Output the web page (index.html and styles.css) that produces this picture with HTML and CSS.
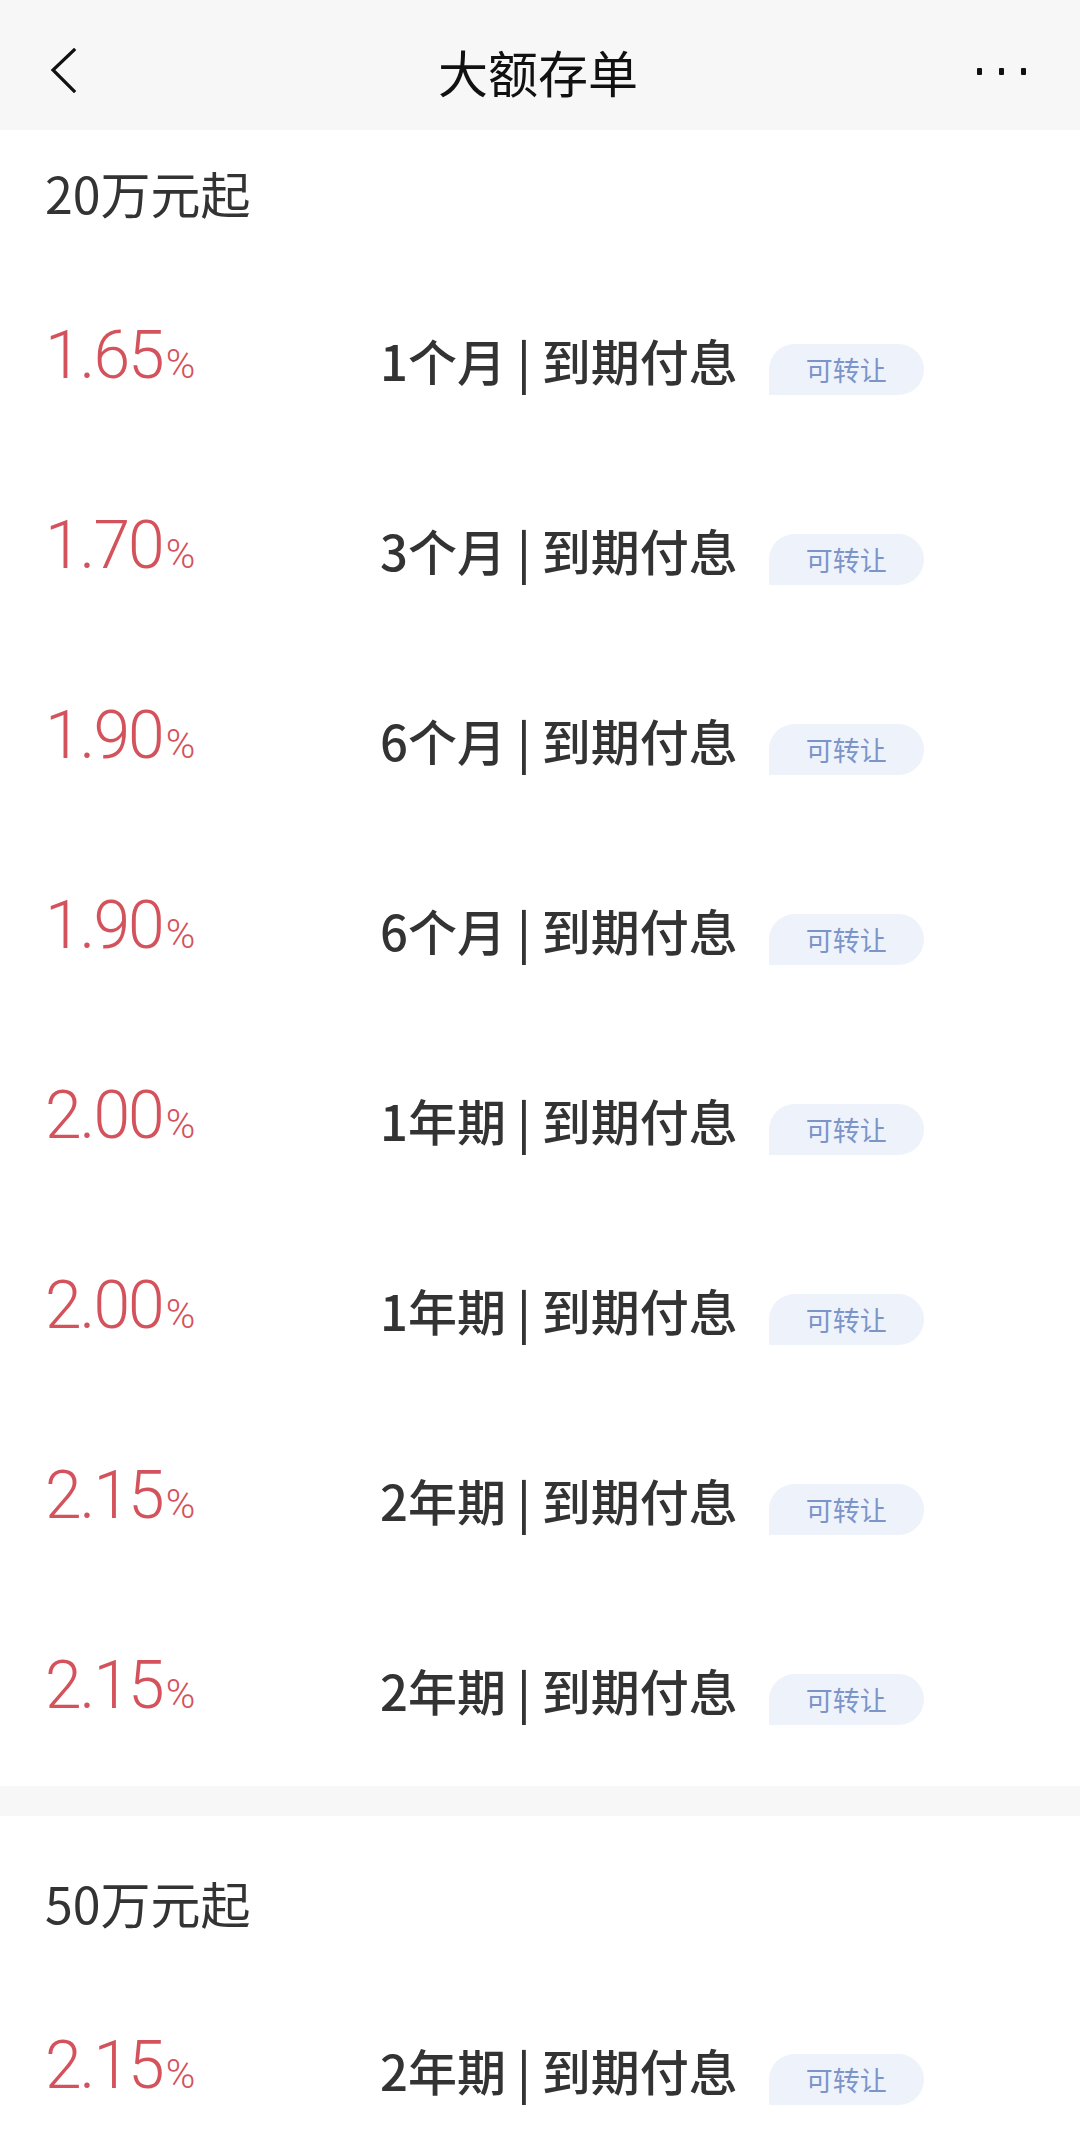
FILE: index.html
```html
<!DOCTYPE html>
<html lang="zh-CN">
<head>
    <meta charset="UTF-8">
    <meta name="viewport" content="width=device-width, initial-scale=1.0">
    <title>大额存单</title>
    <link rel="stylesheet" href="styles.css">
</head>
<body>

    <!-- 顶部导航 -->
    <div class="nav">
        <div class="nav-left">
            <svg class="back" width="30" height="46" viewBox="0 0 30 46">
                <path d="M24 2 L3 22 L24 43" fill="none" stroke="#111" stroke-width="3.2" stroke-linecap="square"/>
            </svg>
        </div>
        <div class="nav-title">大额存单</div>
        <div class="nav-right">
            <span class="dot"></span><span class="dot"></span><span class="dot"></span>
        </div>
    </div>

    <!-- 20万元起 -->
    <div class="group">
        <div class="group-title">20万元起</div>
        <div class="list">
            <div class="row">
                <div class="rate">1.65<span class="pct">%</span></div>
                <div class="term">1个月 | 到期付息</div>
                <span class="tag">可转让</span>
            </div>
            <div class="row">
                <div class="rate">1.70<span class="pct">%</span></div>
                <div class="term">3个月 | 到期付息</div>
                <span class="tag">可转让</span>
            </div>
            <div class="row">
                <div class="rate">1.90<span class="pct">%</span></div>
                <div class="term">6个月 | 到期付息</div>
                <span class="tag">可转让</span>
            </div>
            <div class="row">
                <div class="rate">1.90<span class="pct">%</span></div>
                <div class="term">6个月 | 到期付息</div>
                <span class="tag">可转让</span>
            </div>
            <div class="row">
                <div class="rate">2.00<span class="pct">%</span></div>
                <div class="term">1年期 | 到期付息</div>
                <span class="tag">可转让</span>
            </div>
            <div class="row">
                <div class="rate">2.00<span class="pct">%</span></div>
                <div class="term">1年期 | 到期付息</div>
                <span class="tag">可转让</span>
            </div>
            <div class="row">
                <div class="rate">2.15<span class="pct">%</span></div>
                <div class="term">2年期 | 到期付息</div>
                <span class="tag">可转让</span>
            </div>
            <div class="row">
                <div class="rate">2.15<span class="pct">%</span></div>
                <div class="term">2年期 | 到期付息</div>
                <span class="tag">可转让</span>
            </div>
        </div>
    </div>

    <div class="divider"></div>

    <!-- 50万元起 -->
    <div class="group">
        <div class="group-title">50万元起</div>
        <div class="list">
            <div class="row">
                <div class="rate">2.15<span class="pct">%</span></div>
                <div class="term">2年期 | 到期付息</div>
                <span class="tag">可转让</span>
            </div>
        </div>
    </div>

</body>
</html>
```

FILE: styles.css
```css
body {
    margin: 0;
    padding: 0;
    background: #fff;
    font-family: "Noto Sans CJK SC", "Noto Sans", sans-serif;
    color: #333;
}
.nav {
    box-sizing: border-box;
    height: 130px;
    background: #f7f7f7;
    display: grid;
    grid-template-columns: 1fr auto 1fr;
    align-items: center;
    padding: 12px 54px 0 50px;
}
.nav-left {
    display: flex;
    align-items: center;
}
.back {
    display: block;
}
.nav-title {
    font-size: 50px;
    color: #111;
    line-height: 1;
}
.nav-right {
    display: flex;
    justify-content: flex-end;
    gap: 17px;
}
.dot {
    width: 5px;
    height: 7px;
    border-radius: 1px;
    background: #111;
}
.group {
    padding-left: 45px;
}
.group-title {
    font-size: 50px;
    line-height: 60px;
    padding: 32px 0 40px;
    color: #333;
}
.list {
    padding-bottom: 4px;
}
.row {
    height: 190px;
    display: flex;
    align-items: center;
}
.rate {
    width: 335px;
    font-family: Roboto, "Noto Sans", sans-serif;
    font-weight: 300;
    font-size: 66px;
    letter-spacing: -2px;
    color: #d4525b;
    line-height: 1;
    margin-top: -2px;
}
.rate .pct {
    font-size: 40px;
    letter-spacing: 0;
    margin-left: 3px;
}
.term {
    font-size: 49px;
    font-weight: 500;
    color: #333;
    line-height: 1;
    margin-top: 4px;
}
.tag {
    margin-left: 31px;
    margin-top: 24px;
    height: 51px;
    line-height: 51px;
    padding: 0 37px;
    font-size: 27px;
    color: #7b95c9;
    background: #eef2fb;
    border-radius: 26px 26px 26px 0;
}
.divider {
    height: 30px;
    background: #f7f7f7;
    margin-bottom: 24px;
}
```
